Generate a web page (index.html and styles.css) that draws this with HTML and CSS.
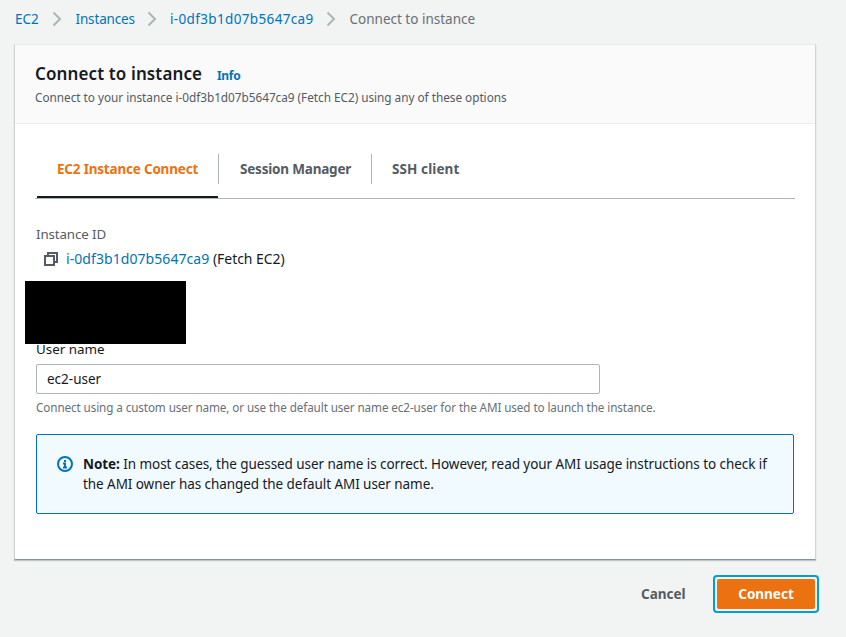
FILE: index.html
```html
<!DOCTYPE html>
<html lang="en">
<head>
<meta charset="utf-8">
<title>Connect to instance</title>
<link rel="stylesheet" href="styles.css">
</head>
<body>
<nav class="crumbs">
  <a class="crumb-ec2">EC2</a>
  <svg class="chevron" viewBox="0 0 10 16"><path d="M1.500 1.500 8 8l-6.500 6.500"/></svg>
  <a class="crumb-list">Instances</a>
  <svg class="chevron" viewBox="0 0 10 16"><path d="M1.500 1.500 8 8l-6.500 6.500"/></svg>
  <a class="crumb-id">i-0df3b1d07b5647ca9</a>
  <svg class="chevron" viewBox="0 0 10 16"><path d="M1.500 1.500 8 8l-6.500 6.500"/></svg>
  <span class="crumb-current">Connect to instance</span>
</nav>
<main class="panel">
  <header class="panel-head">
    <div class="title-row"><h1>Connect to instance</h1><a class="info">Info</a></div>
    <p class="description">Connect to your instance i-0df3b1d07b5647ca9 (Fetch EC2) using any of these options</p>
  </header>
  <div class="panel-body">
    <div class="tabs">
      <div class="tab active"><span>EC2 Instance Connect</span></div>
      <div class="tab session"><span>Session Manager</span></div>
      <div class="tab ssh"><span>SSH client</span></div>
    </div>
    <div class="label">Instance ID</div>
    <div class="instance">
      <svg class="copy" viewBox="0 0 14 14"><path d="M4 4V1h9v9h-3M1 4h9v9H1z"/></svg>
      <span class="instance-text"><a>i-0df3b1d07b5647ca9</a> (Fetch EC2)</span>
    </div>
    <div class="redacted"></div>
    <label class="user-label">User name</label>
    <div class="input">ec2-user</div>
    <p class="hint">Connect using a custom user name, or use the default user name ec2-user for the AMI used to launch the instance.</p>
    <div class="note">
      <svg class="info-icon" viewBox="0 0 16 16"><circle cx="8" cy="8" r="7"/><path d="M8 4v2M6 7.500h2v4M6 11.500h4"/></svg>
      <p><b>Note:</b> In most cases, the guessed user name is correct. However, read your AMI usage instructions to check if<br>the AMI owner has changed the default AMI user name.</p>
    </div>
  </div>
</main>
<footer class="actions">
  <span class="cancel">Cancel</span>
  <span class="connect"><span>Connect</span></span>
</footer>
</body>
</html>
```
FILE: styles.css
```css
* { box-sizing: border-box; }
body {
  margin: 0;
  height: 637px;
  overflow: hidden;
  background: #f2f3f3;
  color: #16191f;
  font: 14px/20px "Noto Sans", sans-serif;
  white-space: nowrap;
}
h1, p { margin: 0; }
a { color: #0073bb; }
svg { display: block; flex: none; fill: none; }

.crumbs { display: flex; height: 44px; padding: 9px 0 0 15px; font-size: 13.5px; }
.chevron { width: 10px; height: 16px; margin-top: 2px; stroke: #aab7b8; stroke-width: 2; }
.crumb-ec2 { width: 37px; }
.crumb-list { width: 72px; margin-left: 13.5px; margin-right: -.5px; letter-spacing: -.15px; }
.crumb-id { width: 156px; margin-left: 13px; letter-spacing: .35px; }
.crumb-current { margin-left: 13.5px; color: #687078; }

.panel {
  width: 802px;
  height: 516px;
  margin-left: 14px;
  border: 1px solid #d0d4d4;
  border-top-color: #eaeded;
  border-bottom-color: #879596;
  background: #fff;
  box-shadow: 0 1px 1px rgba(0, 28, 36, .2);
}
.panel-head { height: 79px; padding: 18px 20px 0; background: #fafafa; border-bottom: 1px solid #eaeded; }
.title-row { display: flex; height: 23px; }
h1 { width: 182px; font-size: 17px; font-weight: 600; line-height: 22px; letter-spacing: .12px; }
.info { padding-top: 3px; font-size: 12px; font-weight: 700; letter-spacing: -.3px; }
.description { color: #545b64; font-size: 11.8px; line-height: 22px; letter-spacing: -.03px; }

.panel-body { padding: 30px 21px 0; }
.tabs { display: flex; height: 45px; width: 760px; margin-left: -1px; padding-left: 1px; border-bottom: 1px solid #aab7b8; }
.tab { display: flex; align-items: center; height: 30px; padding-left: 21px; color: #545b64; font-weight: 700; font-size: 13.5px; letter-spacing: -.2px; border-left: 1px solid #aab7b8; }
.tab.active { width: 181px; height: 44px; margin-left: 1px; padding: 0 0 12px 20px; color: #ec7211; border-left: 0; border-bottom: 2px solid #16191f; }
.session { width: 153px; }
.ssh { padding-left: 20px; letter-spacing: .1px; }
.label { margin-top: 25px; color: #545b64; font-size: 13.3px; letter-spacing: -.1px; }
.instance { display: flex; height: 20px; margin: 5px 0 12px 8px; }
.instance a { letter-spacing: .07px; }
.instance-text { letter-spacing: -.05px; }
.copy { width: 14px; height: 14px; margin: 3px 8px 0 0; stroke: #545b64; stroke-width: 2; }
.redacted { position: relative; z-index: 1; width: 161px; height: 63px; margin-left: -11px; background: #000; }
.user-label { display: block; height: 20px; margin-top: -5px; font-size: 13.4px; }
.input { width: 564px; height: 30px; margin-top: 5px; padding: 4px 10px; border: 1px solid #aab7b8; border-radius: 2px; font-size: 13.5px; }
.hint { margin-top: 3px; color: #687078; font-size: 11.7px; letter-spacing: -.1px; }
.note { display: flex; width: 758px; height: 80px; margin-top: 17px; padding: 19px 20px; background: #f1faff; border: 1px solid #0073bb; border-radius: 2px; font-size: 13.5px; letter-spacing: -.065px; }
.info-icon { width: 16px; height: 16px; margin: 2px 10px 0 0; stroke: #0073bb; stroke-width: 2; }

.actions { display: flex; align-items: center; height: 38px; margin-top: 15px; padding-left: 641px; font-weight: 700; font-size: 13.5px; }
.cancel { width: 72px; color: #545b64; }
.connect { display: grid; place-items: center; width: 106px; height: 38px; border: 2px solid #00a1c9; border-radius: 4px; padding: 2px; }
.connect span { display: grid; place-items: center; width: 98px; height: 30px; color: #fff; background: #ec7211; border-radius: 2px; }
```
